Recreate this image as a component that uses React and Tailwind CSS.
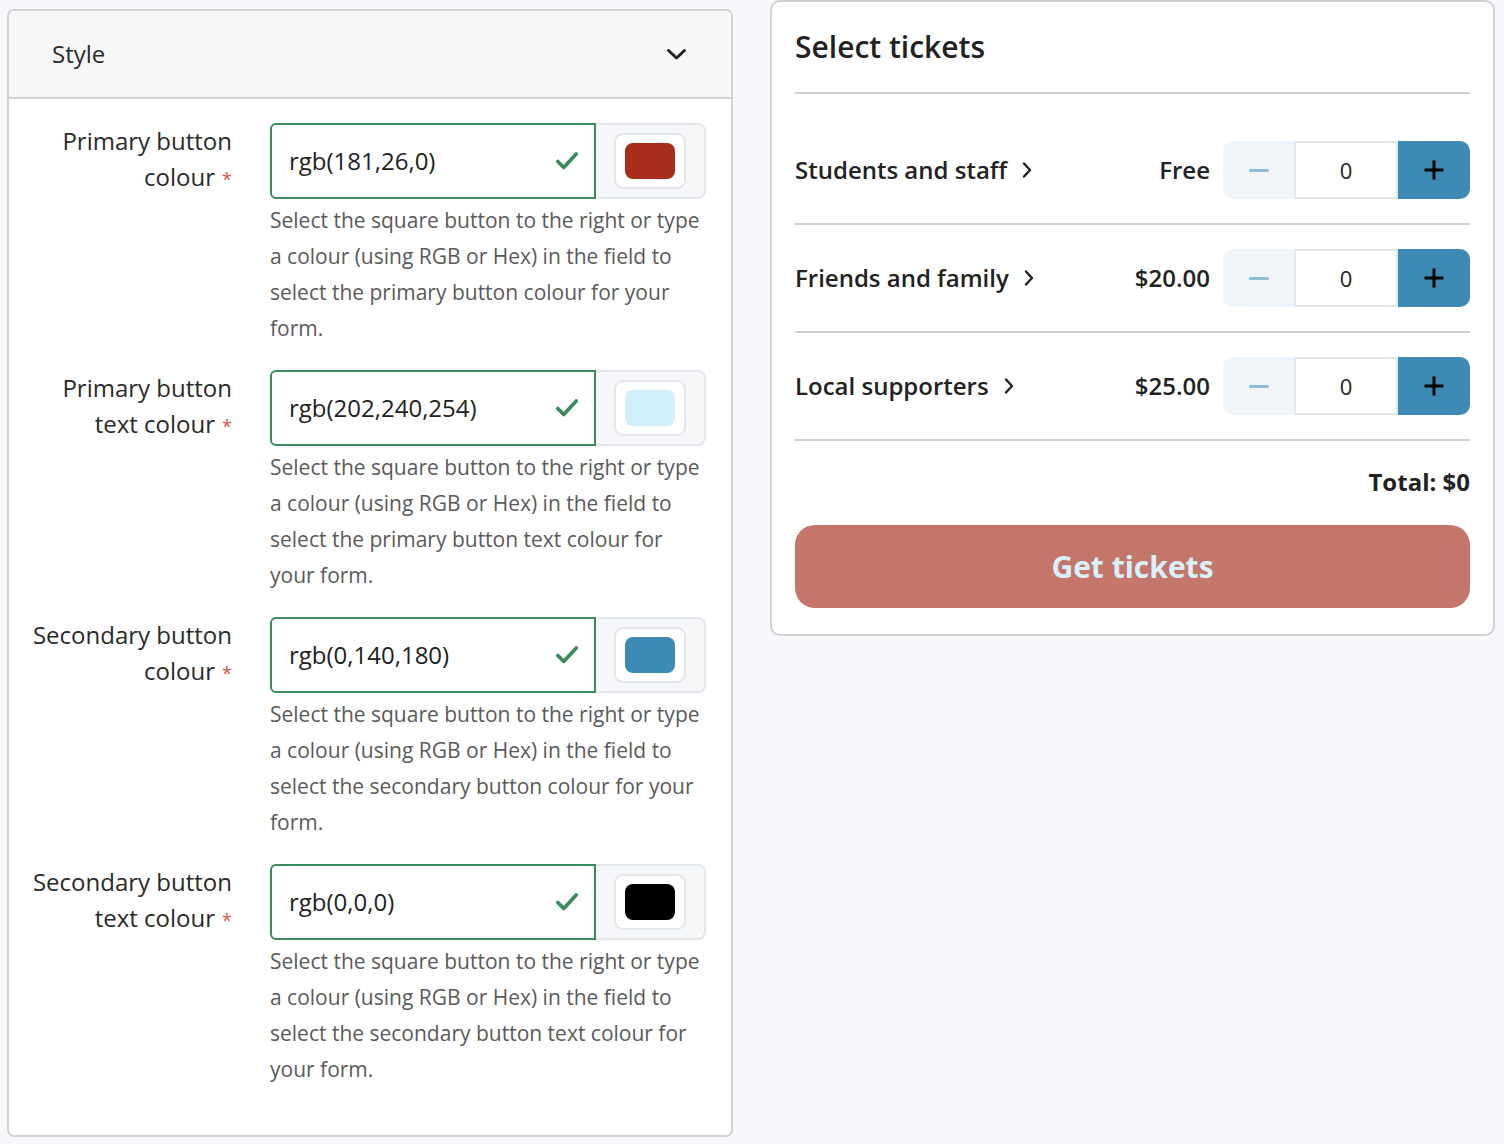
import React, {useState} from 'react';

const colourFields = [
  {
    label: ['Primary button', 'colour'],
    value: 'rgb(181,26,0)',
    swatch: 'bg-[#a82d1a]',
    help: 'Select the square button to the right or type a colour (using RGB or Hex) in the field to select the primary button colour for your form.',
  },
  {
    label: ['Primary button', 'text colour'],
    value: 'rgb(202,240,254)',
    swatch: 'bg-[#d2effc]',
    help: 'Select the square button to the right or type a colour (using RGB or Hex) in the field to select the primary button text colour for your form.',
  },
  {
    label: ['Secondary button', 'colour'],
    value: 'rgb(0,140,180)',
    swatch: 'bg-[#3d8ab4]',
    help: 'Select the square button to the right or type a colour (using RGB or Hex) in the field to select the secondary button colour for your form.',
  },
  {
    label: ['Secondary button', 'text colour'],
    value: 'rgb(0,0,0)',
    swatch: 'bg-black',
    help: 'Select the square button to the right or type a colour (using RGB or Hex) in the field to select the secondary button text colour for your form.',
  },
];

const tickets = [
  {name: 'Students and staff', price: 'Free'},
  {name: 'Friends and family', price: '$20.00'},
  {name: 'Local supporters', price: '$25.00'},
];

function Check() {
  return (
    <svg className="w-[26px] h-[26px] text-[#3b8a5c]" viewBox="0 0 24 24" fill="none" stroke="currentColor" strokeWidth={3.4} strokeLinecap="round" strokeLinejoin="round">
      <path d="M3.5 12.5l5.5 5.5L20.5 5.5" />
    </svg>
  );
}

function ChevronRight() {
  return (
    <svg className="w-[12px] h-[18px] text-[#222]" viewBox="0 0 12 18" fill="none" stroke="currentColor" strokeWidth={2.4} strokeLinecap="round" strokeLinejoin="round">
      <path d="M3 2.5l6 6.5-6 6.5" />
    </svg>
  );
}

function ColourField({field}) {
  return (
    <div className="flex items-start">
      <label className="w-[223px] shrink-0 text-right text-[24px] leading-[36px] text-[#2a2a2a]">
        {field.label[0]}
        <br />
        {field.label[1]}
        <span className="ml-[7px] text-[18px] text-[#d9534f]">*</span>
      </label>
      <div className="ml-[38px] w-[436px]">
        <div className="flex h-[76px]">
          <div className="flex flex-1 items-center border-2 border-[#3b8a5c] rounded-l-[6px] pl-[17px] pr-[14px]">
            <span className="flex-1 text-[24px] text-[#222]">{field.value}</span>
            <Check />
          </div>
          <div className="w-[110px] flex items-center justify-center bg-[#f6f7f9] border-2 border-l-0 border-[#e3e6ea] rounded-r-[8px]">
            <div className="w-[72px] h-[56px] flex items-center justify-center bg-white border-2 border-[#e3e6ea] rounded-[9px]">
              <div className={`w-[50px] h-[36px] rounded-[8px] ${field.swatch}`} />
            </div>
          </div>
        </div>
        <p className="mt-[3px] text-[21px] leading-[36px] text-[#5a5a5a]">{field.help}</p>
      </div>
    </div>
  );
}

function Stepper() {
  let [count, setCount] = useState(0);
  return (
    <div className="flex h-[58px] w-[247px] shrink-0">
      <button
        className="w-[71px] flex items-center justify-center bg-[#eff5f9] rounded-l-[10px]"
        onClick={() => setCount(c => Math.max(0, c - 1))}
      >
        <span className="block w-[20px] h-[3px] rounded bg-[#8cbdd6]" />
      </button>
      <div className="w-[104px] flex items-center justify-center bg-white border-2 border-[#e2e7ec] text-[22px] text-[#222]">
        {count}
      </div>
      <button
        className="w-[72px] flex items-center justify-center bg-[#3d8ab2] rounded-r-[10px]"
        onClick={() => setCount(c => c + 1)}
      >
        <svg className="w-[22px] h-[22px]" viewBox="0 0 22 22" stroke="black" strokeWidth={3}>
          <path d="M11 1.5v19M1.5 11h19" />
        </svg>
      </button>
    </div>
  );
}

export default function App() {
  return (
    <div className="min-h-[1144px] bg-[#f7f8fb] font-['Open_Sans',sans-serif] flex items-start pl-[7px]">
      {/* Style settings */}
      <section className="mt-[9px] w-[726px] bg-white border-2 border-[#d2d2d2] rounded-[7px] overflow-hidden">
        <div className="h-[88px] flex items-center justify-between bg-[#f7f7f7] border-b-2 border-[#d2d2d2] pl-[43px] pr-[44px]">
          <span className="text-[24px] text-[#2a2a2a]">Style</span>
          <svg className="w-[21px] h-[14px] text-[#222]" viewBox="0 0 21 14" fill="none" stroke="currentColor" strokeWidth={3} strokeLinecap="round" strokeLinejoin="round">
            <path d="M2.5 3.5l8 7.5 8-7.5" />
          </svg>
        </div>
        <div className="pt-[24px] pb-[48px] flex flex-col gap-[24px]">
          {colourFields.map(f => (
            <ColourField key={f.value} field={f} />
          ))}
        </div>
      </section>

      {/* Ticket preview */}
      <section className="ml-[37px] w-[725px] bg-white border-2 border-[#d2d2d2] rounded-[10px] px-[23px] pb-[26px]">
        <h2 className="pt-[23px] pb-[23px] text-[30px] leading-[44px] font-semibold text-[#222]">Select tickets</h2>
        <div className="border-t-2 border-[#cfcfcf] pt-[23px]">
          {tickets.map(t => (
            <div key={t.name} className="flex items-center py-[24px] border-b-2 border-[#cfcfcf]">
              <span className="flex items-center gap-[14px] text-[24px] font-semibold text-[#222]">
                {t.name}
                <ChevronRight />
              </span>
              <span className="ml-auto mr-[13px] text-[24px] font-semibold text-[#222]">{t.price}</span>
              <Stepper />
            </div>
          ))}
        </div>
        <div className="mt-[23px] text-right text-[24px] leading-[36px] font-bold text-[#222]">Total: $0</div>
        <button className="mt-[25px] w-full h-[83px] rounded-[20px] bg-[#c4766a] text-[30px] font-bold text-[#d8f0fa]">
          Get tickets
        </button>
      </section>
    </div>
  );
}
